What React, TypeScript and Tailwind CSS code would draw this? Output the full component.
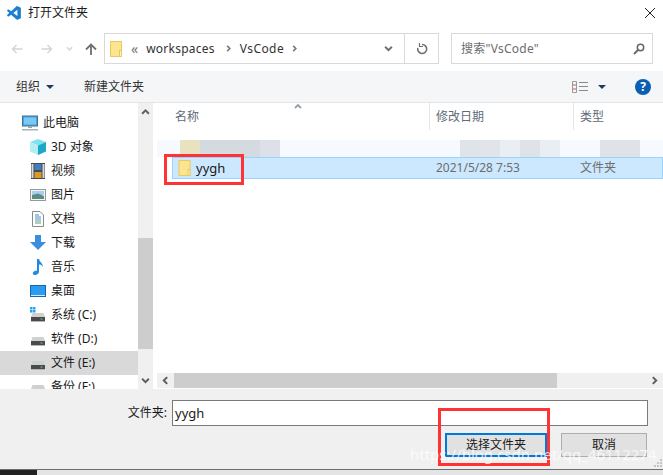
import type { ReactNode } from 'react';
import { VscVscode } from 'react-icons/vsc';

const FONT = "font-['Noto_Sans','Noto_Sans_CJK_SC',sans-serif]";

function FolderIcon({ className }: { className: string }) {
  return (
    <svg viewBox="0 0 12 16" className={className}>
      <rect x="0.5" y="0.5" width="11" height="15" fill="#fde58f" stroke="#e8c765" />
      <rect x="9.5" y="9.5" width="2" height="6" fill="#fff3c4" stroke="#e8c765" />
    </svg>
  );
}

function PcIcon() {
  return (
    <svg width="16" height="16" viewBox="0 0 16 16">
      <rect x="0.5" y="1" width="15" height="10" fill="#3fa7e8" stroke="#4b6f8a" />
      <rect x="2" y="2.5" width="12" height="7" fill="#7cc8f4" />
      <rect x="6" y="11" width="4" height="2" fill="#9aa7b0" />
      <rect x="0" y="14" width="16" height="1.5" fill="#a8b4bc" />
    </svg>
  );
}

function CubeIcon() {
  return (
    <svg width="16" height="16" viewBox="0 0 16 16">
      <path d="M8 0 L16 3 L8 6.5 L0 3 Z" fill="#7fe3ef" />
      <path d="M0 3 L8 6.5 V16 L0 12.5 Z" fill="#b4eef4" />
      <path d="M16 3 L8 6.5 V16 L16 12.5 Z" fill="#1aa8c4" />
    </svg>
  );
}

function FilmIcon() {
  return (
    <svg width="16" height="16" viewBox="0 0 16 16">
      <rect x="1" y="0" width="14" height="16" fill="#4a4a4a" />
      <rect x="1.5" y="1" width="2" height="14" fill="#d8d8d8" />
      <rect x="12.5" y="1" width="2" height="14" fill="#d8d8d8" />
      <rect x="4.5" y="1" width="7" height="6" fill="#3e7fc4" />
      <rect x="4.5" y="9" width="7" height="6" fill="#d99a2b" />
    </svg>
  );
}

function PictureIcon() {
  return (
    <svg width="16" height="16" viewBox="0 0 16 16">
      <rect x="0.5" y="2.5" width="15" height="11" fill="#f4f4f4" stroke="#8f9aa3" />
      <rect x="2" y="4" width="12" height="4" fill="#a8d0ec" />
      <path d="M2 8 L8 6.5 L14 9 V12 H2 Z" fill="#5f8a80" />
    </svg>
  );
}

function DocIcon() {
  return (
    <svg width="16" height="16" viewBox="0 0 16 16">
      <path d="M2.5 0.5 H10 L13.5 4 V15.5 H2.5 Z" fill="#fff" stroke="#8a8a8a" />
      <path d="M5 4 H9 M5 6 H11 M5 8 H11" stroke="#3d8fd1" />
      <path d="M5 10 H11 M5 12 H11" stroke="#5e9c76" />
    </svg>
  );
}

function DownIcon() {
  return (
    <svg width="16" height="16" viewBox="0 0 16 16">
      <path d="M5 0 H11 V7 H16 L8 15 L0 7 H5 Z" fill="#3a8ee0" />
    </svg>
  );
}

function MusicIcon() {
  return (
    <svg width="16" height="16" viewBox="0 0 16 16">
      <path d="M7 0 H9 C9.5 3 13 4 13 8 C12 6 10.5 5.5 9 5.5 V12.5 C9 14.5 7 16 5 16 C3 16 2.5 14.5 3 13.5 C3.8 12 5.8 11.5 7 12 Z" fill="#1f8ae0" />
    </svg>
  );
}

function DesktopIcon() {
  return (
    <svg width="16" height="16" viewBox="0 0 16 16">
      <rect x="0.5" y="2.5" width="15" height="11" fill="#2a9cf2" stroke="#1667a8" />
      <rect x="1" y="12" width="14" height="1" fill="#d6ecfb" />
    </svg>
  );
}

function DriveIcon({ win }: { win?: boolean }) {
  return (
    <svg width="16" height="16" viewBox="0 0 16 16">
      {win && (
        <g fill="#22a7f0">
          <rect x="0" y="0" width="2.5" height="2.5" />
          <rect x="3" y="0" width="2.5" height="2.5" />
          <rect x="0" y="3" width="2.5" height="2.5" />
          <rect x="3" y="3" width="2.5" height="2.5" />
        </g>
      )}
      <path d="M2.5 6 H13.5 L15 10 H1 Z" fill="#d0d0d0" />
      <rect x="1" y="10" width="14" height="4" fill="#4a4a4a" />
      <rect x="1" y="14" width="14" height="1" fill="#b5b5b5" />
      <rect x="10.5" y="11.5" width="2" height="1" fill="#5be05b" />
    </svg>
  );
}

function Caret({ color = '#1f3a5f' }: { color?: string }) {
  return (
    <svg width="8" height="4" viewBox="0 0 8 4">
      <path d="M0 0 H8 L4 4 Z" fill={color} />
    </svg>
  );
}

function Chevron({ dir, color = '#666', size = 8 }: { dir: 'up' | 'down' | 'left' | 'right'; color?: string; size?: number }) {
  const d = {
    up: 'M1 6 L4 3 L7 6',
    down: 'M1 2.5 L4 5.5 L7 2.5',
    left: 'M5.5 1 L2.5 4 L5.5 7',
    right: 'M2.5 1 L5.5 4 L2.5 7',
  }[dir];
  return (
    <svg width={size} height={size} viewBox="0 0 8 8" fill="none">
      <path d={d} stroke={color} strokeWidth="1.8" />
    </svg>
  );
}

function Arrow({ color, flip }: { color: string; flip?: boolean }) {
  return (
    <svg width="12" height="12" viewBox="0 0 12 12" fill="none" className={flip ? 'rotate-180' : ''}>
      <path d="M11.5 6 H1.5 M5.5 2 L1.5 6 L5.5 10" stroke={color} strokeWidth="1.4" />
    </svg>
  );
}

const NAV_ITEMS: { label: string; icon: ReactNode; active?: boolean }[] = [
  { label: '3D 对象', icon: <CubeIcon /> },
  { label: '视频', icon: <FilmIcon /> },
  { label: '图片', icon: <PictureIcon /> },
  { label: '文档', icon: <DocIcon /> },
  { label: '下载', icon: <DownIcon /> },
  { label: '音乐', icon: <MusicIcon /> },
  { label: '桌面', icon: <DesktopIcon /> },
  { label: '系统 (C:)', icon: <DriveIcon win /> },
  { label: '软件 (D:)', icon: <DriveIcon /> },
  { label: '文件 (E:)', icon: <DriveIcon />, active: true },
  { label: '备份 (F:)', icon: <DriveIcon /> },
];

export default function App() {
  return (
    <div className={`relative flex h-[475px] w-[663px] flex-col overflow-hidden bg-white text-[12px] leading-none text-[#1a1a1a] ${FONT}`}>
      {/* title bar */}
      <div className="flex h-[33px] shrink-0 items-center pb-[7px] pl-[6px] pr-[8px]">
        <VscVscode size={17} className="text-[#1a7fd0]" />
        <span className="ml-[5px]">打开文件夹</span>
        <svg width="10" height="10" viewBox="0 0 10 10" className="ml-auto">
          <path d="M0 0 L10 10 M10 0 L0 10" stroke="#222" strokeWidth="1" />
        </svg>
      </div>

      {/* nav row */}
      <div className="flex h-[31px] shrink-0 items-center">
        <div className="ml-[11px] flex items-center"><Arrow color="#d4d4d4" /></div>
        <div className="ml-[18px] flex items-center"><Arrow color="#d4d4d4" flip /></div>
        <div className="ml-[13px] flex items-center"><Chevron dir="down" color="#d8d8d8" size={7} /></div>
        <svg width="12" height="12" viewBox="0 0 12 12" fill="none" className="ml-[12px]">
          <path d="M6 12 V1.5 M1 6.5 L6 1.5 L11 6.5" stroke="#707070" strokeWidth="1.8" />
        </svg>
        <div className="ml-[7px] flex h-[31px] w-[335px] items-center border border-[#d9d9d9]">
          <FolderIcon className="ml-[5px] h-[16px] w-[12px]" />
          <span className="ml-[9px] text-[14px] text-[#777]">«</span>
          <span className="ml-[8px] tracking-[0.25px] text-[#333]">workspaces</span>
          <span className="ml-[10px]"><Chevron dir="right" color="#777" size={7} /></span>
          <span className="ml-[8px] tracking-[0.4px] text-[#333]">VsCode</span>
          <span className="ml-[7px]"><Chevron dir="right" color="#777" size={7} /></span>
          <span className="ml-auto"><Chevron dir="down" color="#707070" size={9} /></span>
          <div className="ml-[11px] flex h-full w-[34px] items-center justify-center border-l border-[#d9d9d9]">
            <svg width="12" height="12" viewBox="0 0 12 12" fill="none">
              <path d="M6 1.5 A4.5 4.5 0 1 1 1.8 5" stroke="#707070" strokeWidth="1.6" />
              <path d="M3.5 0 V3.5 H7" stroke="#707070" strokeWidth="1.2" />
            </svg>
          </div>
        </div>
        <div className="ml-[12px] flex h-[31px] w-[202px] items-center justify-between border border-[#d9d9d9] pl-[9px] pr-[7px] text-[#6d6d6d]">
          <span className="tracking-[0.25px]">搜索"VsCode"</span>
          <svg width="12" height="12" viewBox="0 0 12 12" fill="none">
            <circle cx="7.5" cy="4.5" r="3.2" stroke="#666" strokeWidth="1.5" />
            <path d="M5 7 L1 11" stroke="#666" strokeWidth="1.8" />
          </svg>
        </div>
      </div>

      {/* toolbar */}
      <div className="mt-[7px] flex h-[32px] shrink-0 items-center border-b border-[#e5e5e5] bg-[#f5f6f7] text-[#333]">
        <span className="ml-[16px]">组织</span>
        <span className="ml-[6px] flex"><Caret /></span>
        <span className="ml-[30px]">新建文件夹</span>
        <svg width="16" height="12" viewBox="0 0 16 12" fill="none" className="ml-[428px]">
          <path d="M0.5 0.5 H4.5 V11.5 H0.5 Z" stroke="#9a9a9a" />
          <path d="M1 4 H4 M1 8 H4" stroke="#c9605a" />
          <path d="M7 1.5 H16 M7 5.5 H16 M7 9.5 H16" stroke="#8a8a8a" />
        </svg>
        <span className="ml-[10px] flex"><Caret /></span>
        <span className="ml-[29px] flex h-[16px] w-[16px] items-center justify-center rounded-full bg-[#0a5fb4] text-[12px] font-bold text-white">?</span>
      </div>

      {/* content */}
      <div className="flex h-[286px] shrink-0">
        {/* sidebar */}
        <div className="w-[138px] shrink-0 overflow-hidden pt-[8px]">
          <div className="flex h-[24px] items-center gap-[5px] pl-[22px]">
            <PcIcon />
            <span>此电脑</span>
          </div>
          {NAV_ITEMS.map((item) => (
            <div
              key={item.label}
              className={`flex h-[24px] items-center gap-[5px] pl-[30px] ${item.active ? 'bg-[#d9d9d9]' : ''}`}
            >
              {item.icon}
              <span>{item.label}</span>
            </div>
          ))}
        </div>

        {/* sidebar scrollbar */}
        <div className="flex w-[15px] shrink-0 flex-col items-center bg-[#f0f0f0]">
          <div className="flex h-[17px] items-center"><Chevron dir="up" color="#606060" size={9} /></div>
          <div className="h-[118px] shrink-0" />
          <div className="h-[111px] w-full shrink-0 bg-[#cdcdcd]" />
          <div className="h-[23px] shrink-0" />
          <div className="flex h-[17px] items-center"><Chevron dir="down" color="#606060" size={9} /></div>
        </div>

        {/* file list */}
        <div className="ml-[4px] flex min-w-0 flex-1 flex-col">
          <div className="relative flex h-[27px] shrink-0 items-center text-[#5f6b78]">
            <span className="ml-[18px] w-[254px]">名称</span>
            <div className="flex h-full w-[144px] items-center border-l border-[#e5e5e5] pl-[6px]">修改日期</div>
            <div className="flex h-full flex-1 items-center border-l border-[#e5e5e5] pl-[6px]">类型</div>
            <span className="absolute left-[137px] top-[-1px]"><Chevron dir="up" color="#9aa0a6" /></span>
          </div>

          {/* blurred row */}
          <div className="mt-[10px] flex h-[17px] shrink-0 items-stretch bg-[#f6faff] pl-[23px]">
            <div className="w-[20px] bg-[#e8e2c0]" />
            <div className="w-[60px] bg-[#d5d9e0]" />
            <div className="w-[20px] bg-[#dde0e8]" />
            <div className="ml-[180px] w-[20px] bg-[#dfe4e8]" />
            <div className="w-[20px] bg-[#e1e5ea]" />
            <div className="w-[20px] bg-[#e9eef3]" />
            <div className="w-[20px] bg-[#dfe3e7]" />
            <div className="w-[20px] bg-[#e9eef3]" />
            <div className="ml-[40px] w-[40px] bg-[#dfe3e7]" />
          </div>

          {/* selected row */}
          <div className="ml-[15px] flex h-[22px] shrink-0 items-center border border-[#99d1ff] bg-[#cce8ff] text-[#1a1a1a]">
            <FolderIcon className="ml-[5px] h-[16px] w-[13px]" />
            <span className="ml-[5px] w-[240px] text-[13px]">yygh</span>
            <span className="w-[144px] text-[#6d6d6d]">2021/5/28 7:53</span>
            <span className="text-[#6d6d6d]">文件夹</span>
          </div>

          <div className="flex-1" />

          {/* horizontal scrollbar */}
          <div className="mb-[1px] flex h-[15px] shrink-0 items-center bg-[#f0f0f0]">
            <div className="flex w-[17px] justify-center"><Chevron dir="left" color="#606060" size={9} /></div>
            <div className="h-full w-[383px] bg-[#cdcdcd]" />
            <div className="ml-auto flex w-[17px] justify-center"><Chevron dir="right" color="#606060" size={9} /></div>
          </div>
        </div>
      </div>

      {/* bottom panel */}
      <div className="flex h-[80px] shrink-0 flex-col items-end bg-[#f0f0f0] pr-[15px]">
        <div className="mt-[11px] flex items-center">
          <span className="mr-[5px]">文件夹:</span>
          <div className="flex h-[26px] w-[476px] items-center border border-[#7a7a7a] bg-white pl-[2px] text-[13px]">yygh</div>
        </div>
        <div className="mr-[1px] mt-[7px] flex">
          <div className="flex h-[24px] w-[102px] items-center justify-center border-2 border-[#0078d7] bg-[#e1e1e1]">选择文件夹</div>
          <div className="ml-[14px] flex h-[24px] w-[86px] items-center justify-center border border-[#adadad] bg-[#e1e1e1]">取消</div>
        </div>
      </div>

      {/* strip under the dialog */}
      <div className="flex h-[6px] shrink-0 border-t border-[#6d6d6d] bg-[#e4e4e4]">
        <div className="h-full w-[37px] bg-[#222]" />
      </div>

      {/* annotations */}
      <div className="absolute left-[164px] top-[154px] h-[31px] w-[80px] border-[3px] border-[#ff3333]" />
      <div className="absolute left-[438px] top-[408px] h-[58px] w-[112px] border-[3px] border-[#ff3333]" />
      <div className="absolute left-[410px] top-[447px] text-[15px] text-white/75">https://blog.csdn.net/qq_46112274</div>
      <svg width="9" height="9" viewBox="0 0 9 9" className="absolute left-[654px] top-[459px]">
        <path d="M6 0 H8 V2 H6 Z M3 3 H5 V5 H3 Z M6 3 H8 V5 H6 Z M0 6 H2 V8 H0 Z M3 6 H5 V8 H3 Z M6 6 H8 V8 H6 Z" fill="#c4c4c4" />
      </svg>
    </div>
  );
}
